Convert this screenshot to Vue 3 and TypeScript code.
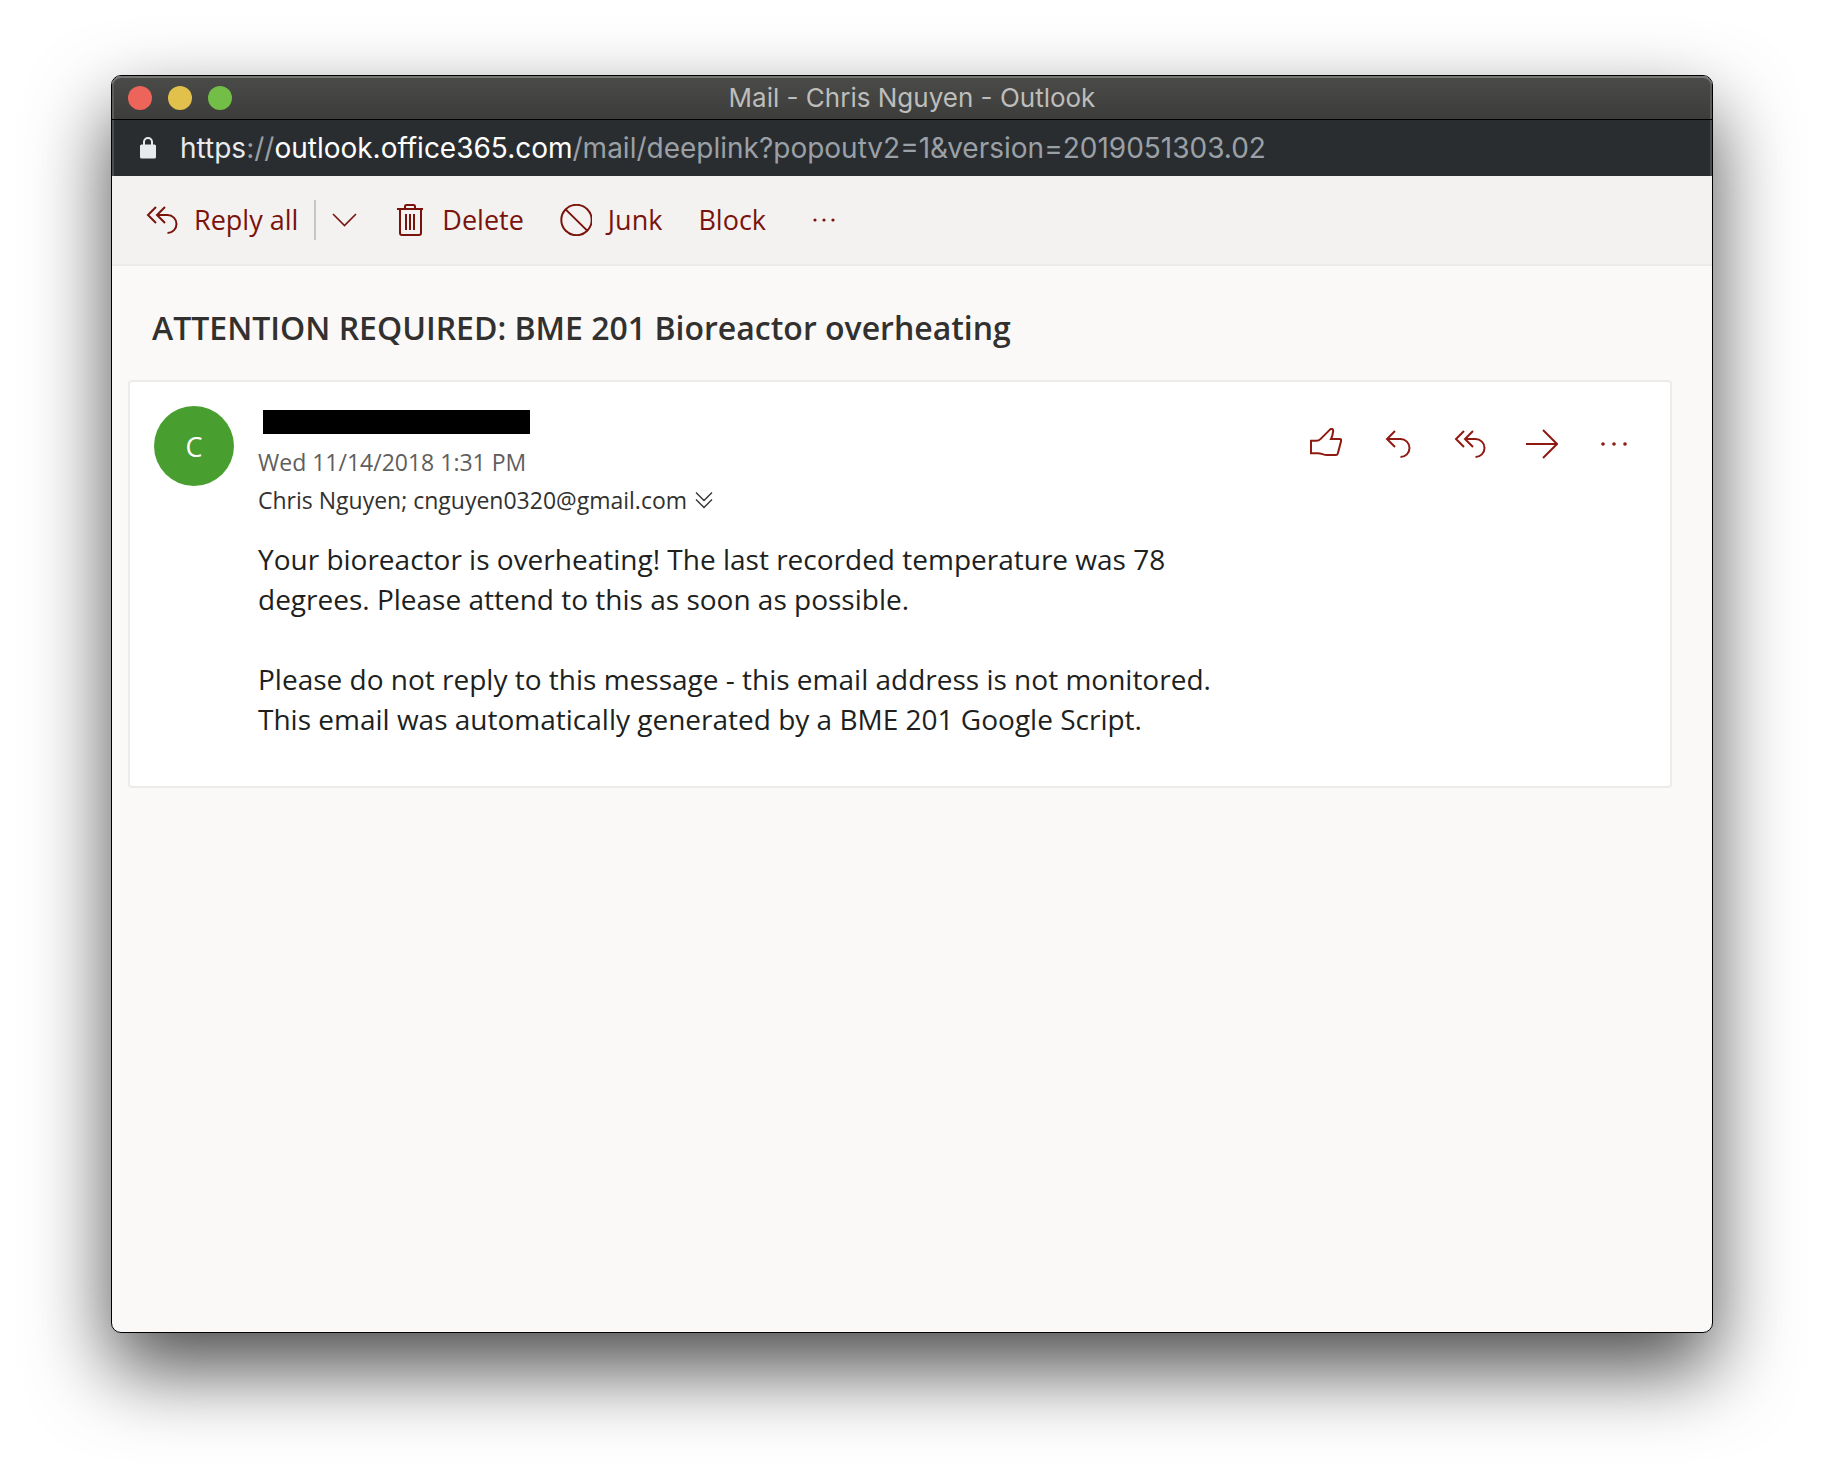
<script setup lang="ts">
interface IconShape {
  d: string
  width?: number
}

const icons: Record<string, IconShape> = {
  replyAll: { d: 'M10 3L2 11L10 19M19 3L11 11L19 19M11 11H21.5A9 9 0 0 1 21.5 29' },
  reply: { d: 'M13 3L5 11L13 19M5 11H18.5A9 9 0 0 1 18.5 29' },
  forward: { d: 'M0 16H31M17 2L31 16L17 30' },
  like: {
    d: 'M1 12.8H6.5C8.3 12.8 9.6 12 10.7 10.9L20.2 1.4C21.4 .3 23.4 1 23.2 2.9C22.9 5.8 22.3 8.4 21 11H30C31 11 31.4 11.7 31.2 12.6L27.8 25.4C27.5 26.5 27 27 26 27H17C13.5 27 11.5 25.2 8 25.2H1Z',
  },
  trash: { d: 'M3 5H29M11 5V2.5C11 1.5 11.5 1 12.5 1H19.5C20.5 1 21 1.5 21 2.5V5M6 5V29C6 30.4 6.6 31 8 31H25C26.4 31 27 30.4 27 29V5M12 10V26M16 10V26M20 10V26' },
  junk: { d: 'M16.5 .8A15.2 15.2 0 1 0 16.5 31.2A15.2 15.2 0 1 0 16.5 .8M5.6 5.4L27.2 26.6', width: 2 },
  chevron: { d: 'M4 10L15.5 21.5L27 10', width: 1.6 },
}

const messageActions = [
  { label: 'Like', icon: 'like' },
  { label: 'Reply', icon: 'reply' },
  { label: 'Reply all', icon: 'replyAll' },
  { label: 'Forward', icon: 'forward' },
]

const body = [
  'Your bioreactor is overheating! The last recorded temperature was 78 degrees. Please attend to this as soon as possible.',
  'Please do not reply to this message - this email address is not monitored. This email was automatically generated by a BME 201 Google Script.',
]
</script>

<template>
  <div class="desktop">
    <div class="window">
      <header class="titlebar">
        <div class="lights">
          <button class="light close" type="button" aria-label="Close"></button>
          <button class="light minimize" type="button" aria-label="Minimize"></button>
          <button class="light zoom" type="button" aria-label="Zoom"></button>
        </div>
        <div class="title">Mail - Chris Nguyen - Outlook</div>
      </header>

      <div class="address">
        <svg class="lock" viewBox="0 0 16 22" aria-hidden="true">
          <path d="M4 9V5A4 4 0 0 1 12 5V9" fill="none" stroke="currentColor" stroke-width="2" />
          <rect x="0" y="7.5" width="16" height="14" rx="1.5" fill="currentColor" />
        </svg>
        <div class="url"><span class="scheme">https</span>://<span class="host">outlook.office365.com</span>/mail/deeplink?popoutv2=1&amp;version=2019051303.02</div>
      </div>

      <nav class="toolbar" aria-label="Message commands">
        <button class="command" type="button">
          <svg class="icon" viewBox="0 0 32 32" aria-hidden="true"><path :d="icons.replyAll.d" /></svg>
          Reply all
        </button>
        <span class="divider"></span>
        <button class="command more-replies" type="button" aria-label="More reply options">
          <svg class="icon" viewBox="0 0 32 32" aria-hidden="true"><path :d="icons.chevron.d" :stroke-width="icons.chevron.width" /></svg>
        </button>
        <button class="command" type="button">
          <svg class="icon" viewBox="0 0 32 32" aria-hidden="true"><path :d="icons.trash.d" /></svg>
          Delete
        </button>
        <button class="command" type="button">
          <svg class="icon" viewBox="0 0 32 32" aria-hidden="true"><path :d="icons.junk.d" :stroke-width="icons.junk.width" /></svg>
          Junk
        </button>
        <button class="command" type="button">Block</button>
        <button class="command overflow" type="button" aria-label="More commands">
          <svg class="icon dots" viewBox="0 0 32 32" aria-hidden="true">
            <circle cx="7" cy="16" r="1.6" /><circle cx="16" cy="16" r="1.6" /><circle cx="25" cy="16" r="1.6" />
          </svg>
        </button>
      </nav>

      <main class="reading">
        <h1 class="subject">ATTENTION REQUIRED: BME 201 Bioreactor overheating</h1>

        <article class="card">
          <div class="avatar">C</div>
          <div class="message">
            <div class="head">
              <div class="meta">
                <div class="sender"><span class="redacted"></span></div>
                <div class="date">Wed 11/14/2018 1:31 PM</div>
                <div class="recipients">
                  <span>Chris Nguyen; cnguyen0320@gmail.com</span>
                  <button class="expand" type="button" aria-label="Show details">
                    <svg viewBox="0 0 18 18" aria-hidden="true"><path d="M1 1.5L9 9.5L17 1.5M1 8.5L9 16.5L17 8.5" /></svg>
                  </button>
                </div>
              </div>
              <div class="actions">
                <button v-for="action in messageActions" :key="action.label" class="action" type="button" :aria-label="action.label">
                  <svg class="icon" viewBox="0 0 32 32" aria-hidden="true"><path :d="icons[action.icon].d" /></svg>
                </button>
                <button class="action" type="button" aria-label="More actions">
                  <svg class="icon dots" viewBox="0 0 32 32" aria-hidden="true">
                    <circle cx="5" cy="16" r="1.8" /><circle cx="16" cy="16" r="1.8" /><circle cx="27" cy="16" r="1.8" />
                  </svg>
                </button>
              </div>
            </div>
            <div class="body">
              <p v-for="(paragraph, index) in body" :key="index">{{ paragraph }}</p>
            </div>
          </div>
        </article>
      </main>
    </div>
  </div>
</template>

<style>
body {
  background: #fff;
}
</style>

<style scoped>
.desktop {
  box-sizing: border-box;
  display: flex;
  min-height: 100vh;
  padding: 75px 111px 147px;
  font-family: "Open Sans", "Noto Sans", sans-serif;
}

button {
  margin: 0;
  padding: 0;
  border: 0;
  background: none;
  color: inherit;
  font: inherit;
  cursor: pointer;
}

.window {
  display: flex;
  flex: 1;
  flex-direction: column;
  min-width: 0;
  overflow: hidden;
  border: 1px solid #000;
  border-radius: 10px;
  background: #faf9f8;
  box-shadow: 0 36px 80px rgba(0, 0, 0, 0.7);
}

.titlebar {
  display: grid;
  grid-template-columns: 1fr auto 1fr;
  align-items: center;
  height: 44px;
  box-sizing: border-box;
  padding: 1px 16px 0;
  border-bottom: 1px solid #000;
  border-radius: 9px 9px 0 0;
  background: linear-gradient(#4b4b49, #3c3c3a);
  box-shadow: inset 0 2px 0 #777776, inset 2px 0 0 #5c5c5b, inset -2px 0 0 #5c5c5b;
  font-family: Inter, Roboto, sans-serif;
}

.lights {
  display: flex;
  gap: 16px;
}

.light {
  width: 24px;
  height: 24px;
  border-radius: 50%;
}

.close {
  background: #ed655a;
}

.minimize {
  background: #e1c04c;
}

.zoom {
  background: #72be47;
}

.title {
  color: #bdbdbb;
  font-size: 26px;
  line-height: 32px;
}

.address {
  display: flex;
  align-items: center;
  gap: 24px;
  height: 56px;
  padding: 0 28px;
  background: #292d30;
  box-shadow: inset 2px 0 0 #4a4d50, inset -2px 0 0 #4a4d50;
  color: #9aa0a6;
  font-family: Inter, Roboto, sans-serif;
}

.lock {
  width: 16px;
  height: 22px;
  color: #e8eaed;
}

.url {
  font-size: 28px;
  line-height: 36px;
  white-space: nowrap;
}

.scheme {
  color: #e8eaed;
}

.host {
  color: #fff;
}

.toolbar {
  display: flex;
  align-items: center;
  gap: 4px;
  height: 88px;
  padding: 0 18px;
  border-bottom: 2px solid #edebe9;
  background: #f3f2f1;
  color: #7a130c;
  font-size: 27px;
  line-height: 40px;
}

.command {
  display: flex;
  align-items: center;
  justify-content: center;
  gap: 16px;
  padding: 0 16px;
  white-space: nowrap;
}

.divider {
  width: 2px;
  height: 40px;
  margin: 0 -4px;
  background: #c8c6c4;
}

.more-replies {
  width: 58px;
}

.overflow {
  width: 76px;
}

.icon {
  display: block;
  flex: none;
  width: 32px;
  height: 32px;
  fill: none;
  stroke: currentColor;
  stroke-width: 2;
}

.dots {
  fill: currentColor;
  stroke: none;
}

.reading {
  padding: 40px 40px 40px 16px;
}

.subject {
  margin: 0 0 30px;
  padding: 0 24px;
  color: #323130;
  font-size: 32px;
  font-weight: 600;
  line-height: 44px;
}

.card {
  display: flex;
  gap: 24px;
  padding: 24px 20px 47px 24px;
  border: 2px solid #edebe9;
  border-radius: 4px;
  background: #fff;
}

.avatar {
  display: flex;
  flex: none;
  align-items: center;
  justify-content: center;
  width: 80px;
  height: 80px;
  border-radius: 50%;
  background: #489e2e;
  color: #fff;
  font-size: 27px;
}

.message {
  flex: 1;
  min-width: 0;
}

.head {
  display: flex;
  justify-content: space-between;
}

.meta {
  color: #323130;
  font-size: 23px;
  line-height: 38px;
}

.sender {
  display: flex;
  align-items: center;
  height: 32px;
  margin-bottom: 5px;
  padding-left: 5px;
}

.redacted {
  width: 267px;
  height: 24px;
  background: #000;
}

.date {
  color: #605e5c;
}

.recipients {
  display: flex;
  align-items: center;
  gap: 8px;
}

.expand svg {
  display: block;
  width: 18px;
  height: 18px;
  fill: none;
  stroke: currentColor;
  stroke-width: 1.3;
}

.actions {
  display: flex;
  height: 76px;
  color: #8e1a12;
}

.action {
  display: flex;
  align-items: center;
  justify-content: center;
  width: 72px;
}

.body {
  max-width: 980px;
  margin-top: 20px;
  color: #201f1e;
  font-size: 28px;
  line-height: 40px;
}

.body p {
  margin: 0 0 40px;
}

.body p:last-child {
  margin-bottom: 0;
}
</style>
